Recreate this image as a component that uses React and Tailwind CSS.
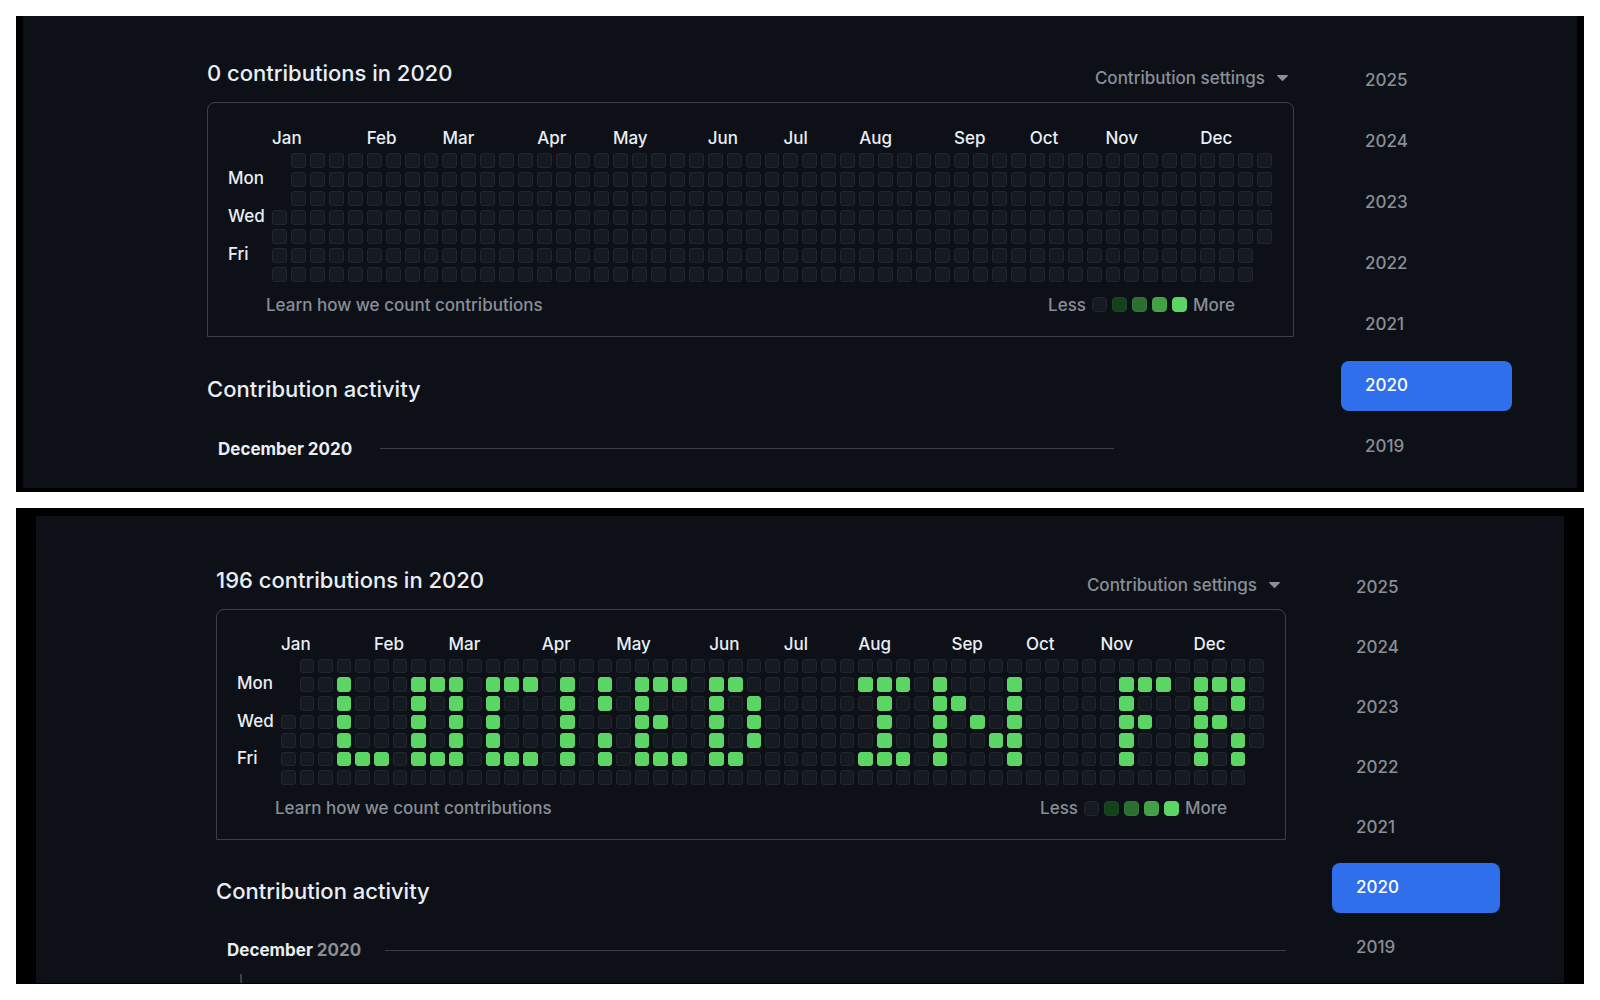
import React from "react";

const MONTHS = [
  { name: "Jan", span: "col-span-5" },
  { name: "Feb", span: "col-span-4" },
  { name: "Mar", span: "col-span-5" },
  { name: "Apr", span: "col-span-4" },
  { name: "May", span: "col-span-5" },
  { name: "Jun", span: "col-span-4" },
  { name: "Jul", span: "col-span-4" },
  { name: "Aug", span: "col-span-5" },
  { name: "Sep", span: "col-span-4" },
  { name: "Oct", span: "col-span-4" },
  { name: "Nov", span: "col-span-5" },
  { name: "Dec", span: "col-span-4" },
];

const DAY_LABELS = ["", "Mon", "", "Wed", "", "Fri", ""];
const YEARS = [2025, 2024, 2023, 2022, 2021, 2020, 2019];
const WEEKS = Array.from({ length: 53 }, (_, i) => i);

// Week index -> weekdays (0 = Sunday) with contributions.
const ACTIVE_DAYS = {
  3: [1, 2, 3, 4, 5],
  4: [5],
  5: [5],
  7: [1, 2, 3, 4, 5],
  8: [1, 5],
  9: [1, 2, 3, 4, 5],
  11: [1, 2, 3, 4, 5],
  12: [1, 5],
  13: [1, 5],
  15: [1, 2, 3, 4, 5],
  17: [1, 2, 4, 5],
  19: [1, 2, 3, 4, 5],
  20: [1, 3, 5],
  21: [1, 5],
  23: [1, 2, 3, 4, 5],
  24: [1, 5],
  25: [2, 3, 4],
  31: [1, 5],
  32: [1, 2, 3, 4, 5],
  33: [1, 5],
  35: [1, 2, 3, 4, 5],
  36: [2],
  37: [3],
  38: [4],
  39: [1, 2, 3, 4, 5],
  45: [1, 2, 3, 4, 5],
  46: [1, 3],
  47: [1],
  49: [1, 2, 3, 4, 5],
  50: [1, 3],
  51: [1, 2, 4, 5],
};

const LEVELS = [
  "bg-[#161b22] border-[#22272e]",
  "bg-[#14401b] border-[#1a4721]",
  "bg-[#2b6f31] border-[#307636]",
  "bg-[#43a047] border-[#48a54c]",
  "bg-[#5bd564] border-[#60d669]",
];

// 2020 starts on a Wednesday and ends on a Thursday.
function inYear(week, day) {
  return !(week === 0 && day < 3) && !(week === 52 && day > 4);
}

function Calendar({ activeDays }) {
  return (
    <table
      aria-label="Contribution calendar"
      className="grid grid-cols-[40px_repeat(53,minmax(0,1fr))] gap-1 text-[#e9eef4]"
    >
      <thead className="contents">
        <tr className="contents">
          <td />
          {MONTHS.map((m) => (
            <th
              key={m.name}
              scope="col"
              className={`${m.span} h-[19px] text-left leading-4 font-medium whitespace-nowrap`}
            >
              {m.name}
            </th>
          ))}
        </tr>
      </thead>
      <tbody className="contents">
        {DAY_LABELS.map((label, day) => (
          <tr key={day} className="contents">
            <th scope="row" className="h-3 text-left leading-3 font-medium">
              {label}
            </th>
            {WEEKS.map((week) => {
              if (!inYear(week, day)) return <td key={week} />;
              const active = (activeDays[week] || []).includes(day);
              return (
                <td
                  key={week}
                  className={`aspect-square rounded-[3px] border ${active ? LEVELS[4] : LEVELS[0]}`}
                />
              );
            })}
          </tr>
        ))}
      </tbody>
    </table>
  );
}

function Legend() {
  return (
    <div className="flex items-center gap-1.5">
      <span>Less</span>
      <div className="flex gap-[5px]">
        {LEVELS.map((level) => (
          <span key={level} className={`size-[15px] rounded-[4px] border ${level}`} />
        ))}
      </div>
      <span>More</span>
    </div>
  );
}

function YearList({ className }) {
  return (
    <nav aria-label="Years" className={`flex shrink-0 flex-col ${className}`}>
      {YEARS.map((year) => (
        <a
          key={year}
          href={`#${year}`}
          className={`flex h-[50px] items-center rounded-lg px-6 ${
            year === 2020 ? "bg-[#2f6feb] text-white" : "text-[#898e97]"
          }`}
        >
          {year}
        </a>
      ))}
    </nav>
  );
}

function Profile({ total, activeDays, boxPad, activityGap, month }) {
  return (
    <main className="min-w-0 flex-1">
      <div className="mb-2.5 flex items-end justify-between">
        <h2 className="pb-0.5 text-[22px] leading-[34px] text-[#e9eef4]">
          {total} contributions in 2020
        </h2>
        <button type="button" className="flex items-center gap-3 pr-1.5 leading-7">
          Contribution settings
          <svg width="11" height="6" viewBox="0 0 11 6" fill="currentColor" aria-hidden="true">
            <path d="M0.6 0h9.8c.5 0 .7.6.4.9L6 5.7a.7.7 0 0 1-1 0L.2.9C-.1.6.1 0 .6 0Z" />
          </svg>
        </button>
      </div>
      <div className={`rounded-t-lg border border-[#3b4048] pb-[19px] pl-5 ${boxPad}`}>
        <Calendar activeDays={activeDays} />
        <div className="mt-[11px] mr-[37px] ml-[38px] flex justify-between leading-6">
          <a href="#learn">Learn how we count contributions</a>
          <Legend />
        </div>
      </div>
      <h2 className={`pb-0.5 text-[22px] leading-[34px] text-[#e9eef4] ${activityGap}`}>
        Contribution activity
      </h2>
      {month}
    </main>
  );
}

export default function App() {
  return (
    <div className="flex min-h-screen flex-col gap-4 bg-white p-4 font-['Inter',sans-serif] text-[17px] font-medium text-[#898e97]">
      <section className="bg-black px-[7px] pb-1">
        <div className="flex bg-[#0d1117] pt-10 pr-[65px] pb-[27px] pl-46">
          <Profile
            total={0}
            activeDays={{}}
            boxPad="pt-[27px] pr-[21px]"
            activityGap="mt-[35px]"
            month={
              <h3 className="mt-[29px] mr-[180px] ml-[11px] flex items-center gap-7 leading-6 font-bold text-[#e9eef4]">
                December 2020
                <span className="h-px flex-1 bg-[#3b4048]" />
              </h3>
            }
          />
          <YearList className="-mb-4 ml-[47px] w-[171px] gap-[11px]" />
        </div>
      </section>
      <section className="bg-black px-5 pt-2 pb-px">
        <div className="flex bg-[#0d1117] pt-[47px] pr-16 pl-45">
          <Profile
            total={196}
            activeDays={ACTIVE_DAYS}
            boxPad="pt-[26px] pr-[21px]"
            activityGap="mt-[34px]"
            month={
              <>
                <h3 className="mt-7 ml-[11px] flex items-center gap-6 leading-6 font-bold text-[#e9eef4]">
                  <span>
                    December <span className="text-[#898e97]">2020</span>
                  </span>
                  <span className="h-px flex-1 bg-[#3b4048]" />
                </h3>
                <div className="mt-3 ml-6 h-[9px] w-0.5 bg-[#3b4048]" />
              </>
            }
          />
          <YearList className="ml-[46px] w-[168px] gap-2.5" />
        </div>
      </section>
    </div>
  );
}
